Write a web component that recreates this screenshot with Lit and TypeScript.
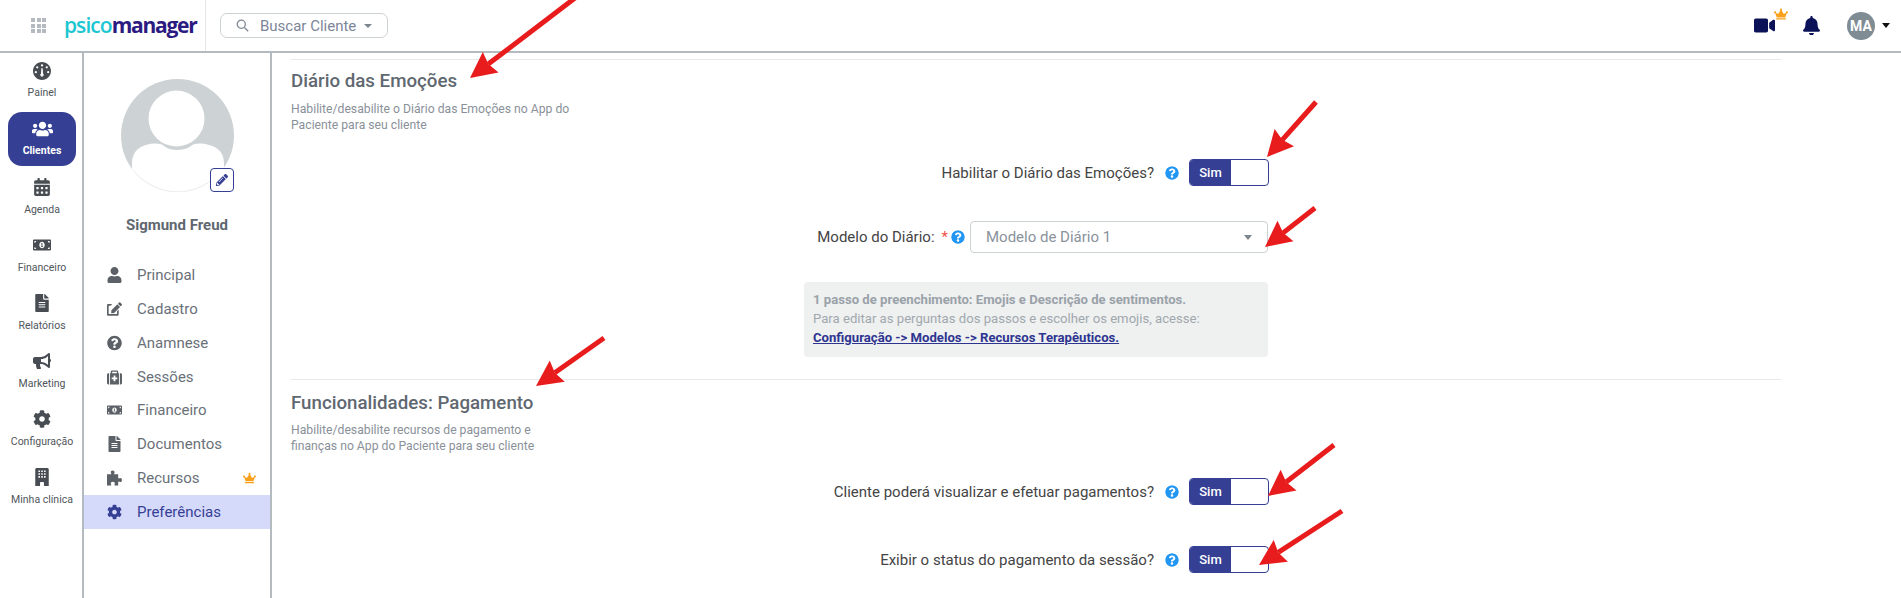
import { LitElement, html, css, svg } from "lit";
import { customElement } from "lit/decorators.js";

const P = {
  user: [448, 512, "M224 256c70.7 0 128-57.3 128-128S294.7 0 224 0 96 57.3 96 128s57.3 128 128 128zm89.6 32h-16.7c-22.2 10.2-46.9 16-72.9 16s-50.6-5.8-72.9-16h-16.7C60.2 288 0 348.2 0 422.4V464c0 26.5 21.5 48 48 48h352c26.5 0 48-21.5 48-48v-41.6c0-74.2-60.2-134.4-134.4-134.4z"],
  help: [512, 512, "M504 256c0 136.997-111.043 248-248 248S8 392.997 8 256C8 119.083 119.043 8 256 8s248 111.083 248 248zM262.655 90c-54.497 0-89.255 22.957-116.549 63.758-3.536 5.286-2.353 12.415 2.715 16.258l34.699 26.31c5.205 3.947 12.621 3.008 16.665-2.122 17.864-22.658 30.113-35.797 57.303-35.797 20.429 0 45.698 13.148 45.698 32.958 0 14.976-12.363 22.667-32.534 33.976C247.128 238.528 216 254.941 216 296v4c0 6.627 5.373 12 12 12h56c6.627 0 12-5.373 12-12v-1.333c0-28.462 83.186-29.647 83.186-106.667 0-58.002-60.165-102-116.531-102zM256 338c-25.365 0-46 20.635-46 46 0 25.364 20.635 46 46 46s46-20.636 46-46c0-25.365-20.635-46-46-46z"],
  file: [384, 512, "M224 136V0H24C10.7 0 0 10.7 0 24v464c0 13.3 10.7 24 24 24h336c13.3 0 24-10.7 24-24V160H248c-13.2 0-24-10.8-24-24zm64 236c0 6.6-5.4 12-12 12H108c-6.6 0-12-5.4-12-12v-8c0-6.6 5.4-12 12-12h168c6.6 0 12 5.4 12 12v8zm0-64c0 6.6-5.4 12-12 12H108c-6.6 0-12-5.4-12-12v-8c0-6.6 5.4-12 12-12h168c6.6 0 12 5.4 12 12v8zm0-72v8c0 6.6-5.4 12-12 12H108c-6.6 0-12-5.4-12-12v-8c0-6.6 5.4-12 12-12h168c6.6 0 12 5.4 12 12zm96-114.1v6.1H256V0h6.1c6.4 0 12.5 2.5 17 7l97.9 98c4.5 4.5 7 10.6 7 16.9z"],
  bullhorn: [576, 512, "M576 240c0-23.63-12.95-44.04-32-55.12V32.01C544 23.26 537.02 0 512 0c-7.12 0-14.19 2.38-19.98 7.02l-85.03 68.03C364.28 109.19 310.66 128 256 128H64c-35.35 0-64 28.65-64 64v96c0 35.35 28.65 64 64 64h33.7c-1.39 10.48-2.18 21.14-2.18 32 0 39.77 9.26 77.35 25.56 110.94 5.19 10.69 16.52 17.06 28.4 17.06h74.28c26.05 0 41.69-29.84 25.9-50.56-16.4-21.52-26.15-48.36-26.15-77.44 0-11.11 1.62-21.79 4.41-32H256c54.66 0 108.28 18.81 150.98 52.95l85.03 68.03a32.023 32.023 0 0 0 19.98 7.02c24.92 0 32-22.78 32-32V295.13C563.05 284.04 576 263.63 576 240zm-96 141.42l-33.05-26.44C392.95 311.78 325.12 288 256 288v-96c69.12 0 136.95-23.78 190.95-66.98L480 98.58v282.84z"],
  cog: [512, 512, "M487.4 315.7l-42.6-24.6c4.3-23.2 4.3-47 0-70.2l42.6-24.6c4.9-2.8 7.1-8.6 5.5-14-11.1-35.6-30-67.8-54.7-94.6-3.8-4.1-10-5.1-14.8-2.3L380.8 110c-17.9-15.4-38.5-27.3-60.8-35.1V25.8c0-5.6-3.9-10.5-9.4-11.7-36.7-8.2-74.3-7.8-109.2 0-5.5 1.2-9.4 6.1-9.4 11.7V75c-22.2 7.9-42.8 19.8-60.8 35.1L88.7 85.5c-4.9-2.8-11-1.9-14.8 2.3-24.7 26.7-43.6 58.9-54.7 94.6-1.7 5.4.6 11.2 5.5 14L67.3 221c-4.3 23.2-4.3 47 0 70.2l-42.6 24.6c-4.9 2.8-7.1 8.6-5.5 14 11.1 35.6 30 67.8 54.7 94.6 3.8 4.1 10 5.1 14.8 2.3l42.6-24.6c17.9 15.4 38.5 27.3 60.8 35.1v49.2c0 5.6 3.9 10.5 9.4 11.7 36.7 8.2 74.3 7.8 109.2 0 5.5-1.2 9.4-6.1 9.4-11.7v-49.2c22.2-7.9 42.8-19.8 60.8-35.1l42.6 24.6c4.9 2.8 11 1.9 14.8-2.3 24.7-26.7 43.6-58.9 54.7-94.6 1.5-5.5-.7-11.3-5.6-14.1zM256 336c-44.1 0-80-35.9-80-80s35.9-80 80-80 80 35.9 80 80-35.9 80-80 80z"],
  pencil: [512, 512, "M497.9 142.1l-46.1 46.1c-4.7 4.7-12.3 4.7-17 0l-111-111c-4.7-4.7-4.7-12.3 0-17l46.1-46.1c18.7-18.7 49.1-18.7 67.9 0l60.1 60.1c18.8 18.7 18.8 49.1 0 67.9zM284.2 99.8L21.6 362.4.4 483.9c-2.9 16.4 11.4 30.6 27.8 27.8l121.5-21.3 262.6-262.6c4.7-4.7 4.7-12.3 0-17l-111-111c-4.8-4.7-12.4-4.7-17.1 0zM124.1 339.9c-5.5-5.5-5.5-14.3 0-19.8l154-154c5.5-5.5 14.3-5.5 19.8 0s5.5 14.3 0 19.8l-154 154c-5.5 5.5-14.3 5.5-19.8 0zM88 424h48v36.3l-64.5 11.3-31.1-31.1L51.7 376H88v48z"],
  edit: [576, 512, "M402.6 83.2l90.2 90.2c3.8 3.8 3.8 10 0 13.8L274.4 405.6l-92.8 10.3c-12.4 1.4-22.9-9.1-21.5-21.5l10.3-92.8L388.8 83.2c3.8-3.8 10-3.8 13.8 0zm162-22.9l-48.8-48.8c-15.2-15.2-39.9-15.2-55.2 0l-35.4 35.4c-3.8 3.8-3.8 10 0 13.8l90.2 90.2c3.8 3.8 10 3.8 13.8 0l35.4-35.4c15.2-15.3 15.2-40 0-55.2zM384 346.2V448H64V128h73.1c3.2 0 6.2-1.3 8.5-3.5l40-40c7.6-7.6 2.2-20.5-8.5-20.5H48C21.5 64 0 85.5 0 112v352c0 26.5 21.5 48 48 48h352c26.5 0 48-21.5 48-48V306.2c0-10.7-12.9-16-20.5-8.5l-40 40c-2.2 2.3-3.5 5.3-3.5 8.5z"],
  puzzle: [512, 512, "M190 0c40 0 70 26 70 60 0 24-18 36-18 52 0 14 12 20 30 20h110v110c0 18 6 30 20 30 16 0 28-18 52-18 34 0 58 30 58 70s-24 70-58 70c-24 0-36-18-52-18-14 0-20 12-20 30v106H280c-18 0-30-6-30-20 0-16 18-28 18-52 0-34-30-58-70-58s-70 24-70 58c0 24 18 36 18 52 0 14-12 20-30 20H0V132h116c18 0 30-6 30-20 0-16-18-28-18-52C128 26 150 0 190 0z"],
  bell: [448, 512, "M224 512c35.32 0 63.97-28.65 63.97-64H160.03c0 35.35 28.65 64 63.97 64zm215.39-149.71c-19.32-20.76-55.47-51.99-55.47-154.29 0-77.7-54.48-139.9-127.94-155.16V32c0-17.67-14.32-32-31.98-32s-31.98 14.33-31.98 32v20.84C118.56 68.1 64.08 130.3 64.08 208c0 102.3-36.15 133.53-55.47 154.29-6 6.45-8.66 14.16-8.61 21.71.11 16.4 12.98 32 32.1 32h383.8c19.12 0 32-15.6 32.1-32 .05-7.55-2.61-15.27-8.61-21.71z"],
  video: [576, 512, "M336.2 64H47.8C21.4 64 0 85.4 0 111.8v288.4C0 426.6 21.4 448 47.8 448h288.4c26.4 0 47.8-21.4 47.8-47.8V111.8c0-26.4-21.4-47.8-47.8-47.8zm189.4 37.7L416 177.3v157.4l109.6 75.5c21.2 14.6 50.4-.3 50.4-25.8V127.5c0-25.4-29.1-40.4-50.4-25.8z"],
  crown: [640, 512, "M528 448H112c-8.8 0-16 7.2-16 16v32c0 8.8 7.2 16 16 16h416c8.8 0 16-7.2 16-16v-32c0-8.8-7.2-16-16-16zm64-320c-26.5 0-48 21.5-48 48 0 7.1 1.6 13.7 4.4 19.8L476 239.2c-15.4 9.2-35.3 4-44.2-11.6L350.3 85C361 76.2 368 63 368 48c0-26.5-21.5-48-48-48s-48 21.5-48 48c0 15 7 28.2 17.7 37l-81.5 142.6c-8.9 15.6-28.9 20.8-44.2 11.6l-72.3-43.4c2.7-6 4.4-12.7 4.4-19.8 0-26.5-21.5-48-48-48S0 149.5 0 176s21.5 48 48 48c2.6 0 5.2-.4 7.7-.8L128 416h384l72.3-192.8c2.5.4 5.1.8 7.7.8 26.5 0 48-21.5 48-48s-21.5-48-48-48z"],
  calendar: [448, 512, "M0 464c0 26.5 21.5 48 48 48h352c26.5 0 48-21.5 48-48V192H0v272zm320-196c0-6.6 5.4-12 12-12h40c6.6 0 12 5.4 12 12v40c0 6.6-5.4 12-12 12h-40c-6.6 0-12-5.4-12-12v-40zm0 128c0-6.6 5.4-12 12-12h40c6.6 0 12 5.4 12 12v40c0 6.6-5.4 12-12 12h-40c-6.6 0-12-5.4-12-12v-40zM192 268c0-6.6 5.4-12 12-12h40c6.6 0 12 5.4 12 12v40c0 6.6-5.4 12-12 12h-40c-6.6 0-12-5.4-12-12v-40zm0 128c0-6.6 5.4-12 12-12h40c6.6 0 12 5.4 12 12v40c0 6.6-5.4 12-12 12h-40c-6.6 0-12-5.4-12-12v-40zM64 268c0-6.6 5.4-12 12-12h40c6.6 0 12 5.4 12 12v40c0 6.6-5.4 12-12 12H76c-6.6 0-12-5.4-12-12v-40zm0 128c0-6.6 5.4-12 12-12h40c6.6 0 12 5.4 12 12v40c0 6.6-5.4 12-12 12H76c-6.6 0-12-5.4-12-12v-40zM400 64h-48V16c0-8.8-7.2-16-16-16h-32c-8.8 0-16 7.2-16 16v48H160V16c0-8.8-7.2-16-16-16h-32c-8.8 0-16 7.2-16 16v48H48C21.5 64 0 85.5 0 112v48h448v-48c0-26.5-21.5-48-48-48z"],
  users: [640, 512, "M96 224c35.3 0 64-28.7 64-64s-28.7-64-64-64-64 28.7-64 64 28.7 64 64 64zm448 0c35.3 0 64-28.7 64-64s-28.7-64-64-64-64 28.7-64 64 28.7 64 64 64zm32 32h-64c-17.6 0-33.5 7.1-45.1 18.6 40.3 22.1 68.9 62 75.1 109.4h66c17.7 0 32-14.3 32-32v-32c0-35.3-28.7-64-64-64zm-256 0c61.9 0 112-50.1 112-112S381.9 32 320 32 208 82.1 208 144s50.1 112 112 112zm76.8 32h-8.3c-20.8 10-43.9 16-68.5 16s-47.6-6-68.5-16h-8.3C179.6 288 128 339.6 128 403.2V432c0 26.5 21.5 48 48 48h288c26.5 0 48-21.5 48-48v-28.8c0-63.6-51.6-115.2-115.2-115.2zm-223.7-13.4C161.5 263.1 145.6 256 128 256H64c-35.3 0-64 28.7-64 64v32c0 17.7 14.3 32 32 32h65.9c6.3-47.4 34.9-87.3 75.2-109.4z"],
  money: [640, 512, "M352 288h-16v-88c0-4.42-3.58-8-8-8h-13.58c-4.74 0-9.37 1.4-13.31 4.03l-15.33 10.22a7.994 7.994 0 0 0-2.22 11.09l8.88 13.31a7.994 7.994 0 0 0 11.09 2.22l.47-.31V288h-16c-4.42 0-8 3.58-8 8v16c0 4.42 3.58 8 8 8h64c4.42 0 8-3.58 8-8v-16c0-4.42-3.58-8-8-8zM608 64H32C14.33 64 0 78.33 0 96v320c0 17.67 14.33 32 32 32h576c17.67 0 32-14.33 32-32V96c0-17.67-14.33-32-32-32zM48 400v-64c35.35 0 64 28.65 64 64H48zm0-224v-64h64c0 35.35-28.65 64-64 64zm272 192c-53 0-96-50.15-96-112 0-61.86 43-112 96-112s96 50.14 96 112c0 61.87-43.02 112-96 112zm272 32h-64c0-35.35 28.65-64 64-64v64zm0-224c-35.35 0-64-28.65-64-64h64v64z"],
  briefcase: [512, 512, "M464 128h-80V80c0-26.5-21.5-48-48-48H176c-26.5 0-48 21.5-48 48v48H48c-26.5 0-48 21.5-48 48v288c0 26.5 21.5 48 48 48h416c26.5 0 48-21.5 48-48V176c0-26.5-21.5-48-48-48zM176 80h160v48H176V80zm176 248c0 4.4-3.6 8-8 8h-56v56c0 4.4-3.6 8-8 8h-48c-4.4 0-8-3.6-8-8v-56h-56c-4.4 0-8-3.6-8-8v-48c0-4.4 3.6-8 8-8h56v-56c0-4.4 3.6-8 8-8h48c4.4 0 8 3.6 8 8v56h56c4.4 0 8 3.6 8 8v48z M72 128h32v384H72z M408 128h32v384h-32z"],
  gauge: [512, 512, "M256 0C115 0 0 115 0 256s115 256 256 256 256-115 256-256S397 0 256 0zm0 64a32 32 0 1 1 0 64 32 32 0 0 1 0-64zM120 120a32 32 0 1 1 0 64 32 32 0 0 1 0-64zm272 0a32 32 0 1 1 0 64 32 32 0 0 1 0-64zM80 256a32 32 0 1 1 0 64 32 32 0 0 1 0-64zm352 0a32 32 0 1 1 0 64 32 32 0 0 1 0-64zM236 180h40l8 150a48 48 0 1 1-56 0z"],
  building: [384, 512, "M40 0h304c22 0 40 18 40 40v472H248v-88c0-15-12-27-27-27h-58c-15 0-27 12-27 27v88H0V40C0 18 18 0 40 0zm50 70v45h45V70zm80 0v45h45V70zm80 0v45h45V70zM90 150v45h45v-45zm80 0v45h45v-45zm80 0v45h45v-45zM90 230v45h45v-45zm80 0v45h45v-45zm80 0v45h45v-45z"],
} as const;

function icon(name: keyof typeof P, cls = "") {
  const [w, h, d] = P[name];
  return html`<svg class="ic ${cls}" viewBox="0 0 ${w} ${h}" fill="currentColor"><path fill-rule="evenodd" d="${d}"></path></svg>`;
}

const NAV: [keyof typeof P, string, boolean?][] = [
  ["gauge", "Painel"],
  ["users", "Clientes", true],
  ["calendar", "Agenda"],
  ["money", "Financeiro"],
  ["file", "Relatórios"],
  ["bullhorn", "Marketing"],
  ["cog", "Configuração"],
  ["building", "Minha clínica"],
];

const MENU: [keyof typeof P, string][] = [
  ["user", "Principal"],
  ["edit", "Cadastro"],
  ["help", "Anamnese"],
  ["briefcase", "Sessões"],
  ["money", "Financeiro"],
  ["file", "Documentos"],
  ["puzzle", "Recursos"],
  ["cog", "Preferências"],
];

const ARROWS: [number, number, number, number][] = [
  [575, -2, 470, 78],
  [1316, 102, 1267, 157],
  [1315, 208, 1265, 247],
  [604, 338, 536, 386],
  [1334, 445, 1268, 496],
  [1342, 511, 1259, 565],
];

function arrow([x1, y1, x2, y2]: [number, number, number, number]) {
  const a = Math.atan2(y2 - y1, x2 - x1);
  const L = 26, W = 13;
  const bx = x2 - Math.cos(a) * L, by = y2 - Math.sin(a) * L;
  const nx = -Math.sin(a) * W, ny = Math.cos(a) * W;
  const nbx = x2 - Math.cos(a) * (L - 3), nby = y2 - Math.sin(a) * (L - 3);
  return svg`<line x1=${x1} y1=${y1} x2=${nbx} y2=${nby} stroke="#e81c1c" stroke-width="5"></line>
    <polygon fill="#e81c1c" points="${x2},${y2} ${bx + nx},${by + ny} ${nbx},${nby} ${bx - nx},${by - ny}"></polygon>`;
}

@customElement("app-root")
export class AppRoot extends LitElement {
  static styles = css`
    :host { display: block; position: relative; height: 598px; overflow: hidden; background: #fff; font-family: Roboto, "Liberation Sans", sans-serif; color: #444; }
    * { box-sizing: border-box; }
    .ic { display: block; }
    .top { height: 53px; border-bottom: 2px solid #b3bac0; display: flex; align-items: center; }
    .brand { width: 206px; height: 51px; border-right: 1px solid #e6e8e8; display: flex; align-items: center; padding-left: 31px; }
    .grid { width: 15px; height: 15px; display: grid; grid-template-columns: repeat(3, 4px); gap: 1.5px; }
    .grid i { background: #b4bac0; }
    .logo { margin-left: 18px; font: 700 21px/1 "Open Sans", sans-serif; letter-spacing: -0.95px; margin-top: -1px; white-space: nowrap; }
    .logo .a { color: #1cc6d2; font-weight: 600; }
    .logo .b { color: #2b1a80; letter-spacing: -1.25px; }
    .search { margin-left: 14px; width: 168px; height: 25px; border: 1px solid #cdd2d5; border-radius: 7px; display: flex; align-items: center; padding-left: 15px; color: #7c8598; font-size: 15px; }
    .search svg { width: 13px; height: 13px; margin-right: 11px; color: #7c8590; }
    .caret { width: 0; height: 0; border-left: 4px solid transparent; border-right: 4px solid transparent; border-top: 4px solid currentColor; }
    .search .caret { margin-left: 8px; color: #7c8590; }
    .right { margin-left: auto; display: flex; align-items: center; padding-right: 11px; color: #0b1257; }
    .vid { position: relative; width: 21px; height: 16px; margin-right: 28px; }
    .vid .ic { width: 21px; height: 19px; margin-top: -2px; }
    .vid .ic.crown { position: absolute; left: 20px; top: -10px; width: 14px; height: 12px; color: #f9a11b; margin: 0; }
    .bell { width: 17px; height: 19px; margin-right: 27px; }
    .me { width: 28px; height: 28px; border-radius: 50%; background: #7f8c94; color: #fff; font-weight: 700; font-size: 14px; display: flex; align-items: center; justify-content: center; margin-right: 7px; }
    .right .caret { color: #111; border-left-width: 4.5px; border-right-width: 4.5px; border-top-width: 5px; }

    .body { display: flex; height: 545px; }
    .nav { width: 84px; border-right: 2px solid #b3bac0; padding: 8px 8px 0; display: flex; flex-direction: column; }
    .nav a { height: 58px; width: 68px; flex: none; display: flex; flex-direction: column; align-items: center; color: #50565b; font-size: 10.5px; border-radius: 14px; }
    .nav a .ico { height: 18px; display: flex; align-items: center; justify-content: center; color: #474d52; }
    .nav a .ico svg { height: 18px; width: 18px; }
    .nav a span { margin-top: 7px; line-height: 14px; }
    .nav a.on { background: #353f94; color: #fff; font-weight: 700; height: 54px; padding-top: 8px; margin: 0 0 12px; }
    .nav a.on span, .nav a:first-child span { margin-top: 6px; }
    .nav a.on .ico { color: #fff; }
    .nav a.on .ico svg { width: 21px; height: 18px; }
    .nav a:first-child { margin-bottom: 1px; height: 50px; padding-top: 1px; }

    .side { width: 188px; border-right: 2px solid #b3bac0; display: flex; flex-direction: column; padding-top: 26px; }
    .photo { width: 113px; height: 113px; margin-left: 37px; position: relative; }
    .photo > svg { display: block; }
    .pen { position: absolute; right: 0; bottom: 0; width: 24px; height: 24px; background: #fff; border: 1px solid #353f94; border-radius: 4px; display: flex; align-items: center; justify-content: center; color: #353f94; }
    .pen svg { width: 12px; height: 12px; }
    .name { width: 186px; text-align: center; font-weight: 700; font-size: 15px; color: #5f6870; line-height: 20px; margin-top: 23px; }
    .menu { margin-top: 23px; }
    .menu a { height: 33.86px; display: flex; align-items: center; padding-left: 23px; font-size: 15px; color: #6a7078; position: relative; }
    .menu a .i { width: 15px; height: 16px; margin-right: 15px; display: flex; align-items: center; justify-content: center; color: #5b6166; }
    .menu a .i svg { width: 15px; height: 16px; }
    .menu a.on { background: #d5dafb; color: #353f94; }
    .menu a.on .i { color: #353f94; }
    .menu .ic.crown { position: absolute; right: 14px; top: 11px; width: 13px; height: 12px; color: #f9a11b; }

    .main { flex: 1; padding: 6px 120px 0 19px; overflow: hidden; }
    .sec { border-top: 1px solid #e8eaea; padding-top: 10px; }
    h2 { margin: 0; font-size: 18.72px; font-weight: 500; line-height: 22px; color: #5f6870; }
    .sub { margin: 10px 0 0; width: 281px; font-size: 12.2px; line-height: 15.5px; color: #8a9199; }
    .form { width: 978px; }
    .row { display: flex; justify-content: flex-end; align-items: center; font-size: 15px; color: #444; height: 27px; white-space: nowrap; }
    .h { width: 14px; height: 14px; color: #2196f3; background: radial-gradient(circle, #fff 60%, transparent 61%); border-radius: 50%; flex: none; }
    .row .h { margin: 0 10px 0 11px; }
    .tg { width: 80px; height: 27px; border: 1px solid #353f94; border-radius: 4px; display: flex; overflow: hidden; background: #fff; font-size: 13px; }
    .tg b { width: 41px; background: #353f94; color: #fff; font-weight: 500; display: flex; align-items: center; justify-content: center; }
    .r1 { margin-top: 26px; }
    .r2 { margin-top: 35px; height: 32px; }
    .r2 .star { color: #f0524a; margin-left: 7px; }
    .row.r2 .h { margin: 0 5px 0 3px; }
    .sel { width: 298px; height: 32px; border: 1px solid #ccd1d4; border-radius: 4px; display: flex; align-items: center; justify-content: space-between; padding: 0 15px 0 15px; color: #8a929b; margin-right: 1px; }
    .sel .caret { color: #7d858c; border-left-width: 4.5px; border-right-width: 4.5px; border-top-width: 5px; }
    .note { margin: 29px 1px 22px auto; width: 464px; height: 75px; background: #eff0f0; border-radius: 4px; padding: 8px 9px; font-size: 13.13px; line-height: 19px; color: #a0a8ae; }
    .note b { font-weight: 700; color: #9aa2a9; display: block; }
    .note a { display: block; font-weight: 700; color: #2e3590; text-decoration: underline; }
    .sec2 { padding-top: 12px; }
    .sec2 .sub { margin-top: 9px; }
    .r3 { margin-top: 24px; }
    .r4 { margin-top: 41px; }
    .arrows { position: absolute; left: 0; top: 0; pointer-events: none; }
  `;

  render() {
    return html`
      <div class="top">
        <div class="brand">
          <div class="grid">${Array.from({ length: 9 }, () => html`<i></i>`)}</div>
          <div class="logo"><span class="a">psico</span><span class="b">manager</span></div>
        </div>
        <div class="search">
          <svg viewBox="0 0 16 16" fill="none" stroke="currentColor" stroke-width="1.6"><circle cx="6.5" cy="6.5" r="5"></circle><path d="M10.4 10.4 15 15"></path></svg>
          Buscar Cliente<span class="caret"></span>
        </div>
        <div class="right">
          <div class="vid">${icon("video")}${icon("crown", "crown")}</div>
          <div class="bell">${icon("bell")}</div>
          <div class="me">MA</div>
          <span class="caret"></span>
        </div>
      </div>
      <div class="body">
        <div class="nav">
          ${NAV.map(([i, t, on]) => html`<a class=${on ? "on" : ""}><div class="ico">${icon(i)}</div><span>${t}</span></a>`)}
        </div>
        <div class="side">
          <div class="photo">
            <svg width="113" height="113" viewBox="0 0 113 113">
              <defs><clipPath id="c"><circle cx="56.5" cy="56.5" r="56.5"></circle></clipPath></defs>
              <circle cx="56.5" cy="56.5" r="56.5" fill="#cdd2d4"></circle>
              <g clip-path="url(#c)">
                <circle cx="55.5" cy="39.5" r="28" fill="#fff"></circle>
                <path d="M11 113V84c0-10 6-16 14-18 8-2 14-2 18 1 4 3 9 4 13 4s10-1 14-4c4-3 10-3 18-1 9 2 15 8 15 18v29z" fill="#fff"></path>
              </g>
              <path d="M13 92A56 56 0 0 0 100 92" fill="none" stroke="#eceeef"></path>
            </svg>
            <div class="pen">${icon("pencil")}</div>
          </div>
          <div class="name">Sigmund Freud</div>
          <div class="menu">
            ${MENU.map(([i, t], n) => html`<a class=${n === 7 ? "on" : ""}><span class="i">${icon(i)}</span>${t}${n === 6 ? icon("crown", "crown") : ""}</a>`)}
          </div>
        </div>
        <div class="main">
          <div class="sec">
            <h2>Diário das Emoções</h2>
            <p class="sub">Habilite/desabilite o Diário das Emoções no App do Paciente para seu cliente</p>
            <div class="form">
              <div class="row r1">Habilitar o Diário das Emoções? ${icon("help", "h")}<div class="tg"><b>Sim</b></div></div>
              <div class="row r2">Modelo do Diário: <span class="star">*</span>${icon("help", "h")}<div class="sel">Modelo de Diário 1<span class="caret"></span></div></div>
              <div class="note"><b>1 passo de preenchimento: Emojis e Descrição de sentimentos.</b>Para editar as perguntas dos passos e escolher os emojis, acesse:<a>Configuração -> Modelos -> Recursos Terapêuticos.</a></div>
            </div>
          </div>
          <div class="sec sec2">
            <h2>Funcionalidades: Pagamento</h2>
            <p class="sub">Habilite/desabilite recursos de pagamento e finanças no App do Paciente para seu cliente</p>
            <div class="form">
              <div class="row r3">Cliente poderá visualizar e efetuar pagamentos? ${icon("help", "h")}<div class="tg"><b>Sim</b></div></div>
              <div class="row r4">Exibir o status do pagamento da sessão? ${icon("help", "h")}<div class="tg"><b>Sim</b></div></div>
            </div>
          </div>
        </div>
      </div>
      <svg class="arrows" width="1901" height="598">${ARROWS.map(arrow)}</svg>
    `;
  }
}
